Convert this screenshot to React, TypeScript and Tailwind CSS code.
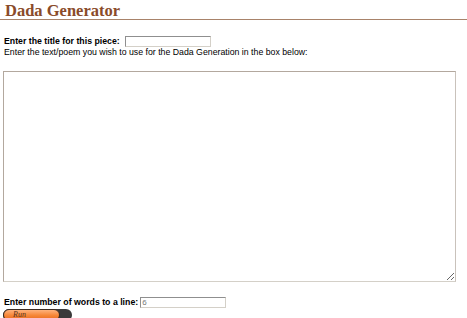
export default function App() {
  return (
    <div className="w-[467px] h-[318px] overflow-hidden bg-white text-black font-['Liberation_Sans',Arial,sans-serif]">
      <h1 className="pl-[5px] pt-[2px] h-[18px] text-[16.5px] leading-[17px] font-bold font-['Liberation_Serif','Times_New_Roman',serif] text-[#8a4b2a]">
        Dada Generator
      </h1>
      <div className="mt-[1px] h-px bg-[#a8836a]" />

      <form className="pl-[4px] pt-[16px]" onSubmit={(e) => e.preventDefault()}>
        <div className="flex items-center h-[11px] text-[8.75px] font-bold leading-[11px]">
          <span>Enter the title for this piece:</span>
          <input
            type="text"
            className="ml-[5px] w-[86px] h-[11px] border border-t-[#8f8f8f] border-l-[#8f8f8f] border-b-[#d4d0c8] border-r-[#d4d0c8] bg-white outline-none"
          />
        </div>
        <p className="text-[8.75px] leading-[11px]">
          Enter the text/poem you wish to use for the Dada Generation in the box below:
        </p>

        <textarea className="block -ml-[1px] mt-[13px] w-[453px] h-[211px] resize border border-t-[#b3a89e] border-l-[#b3a89e] border-b-[#d4d0c8] border-r-[#c9c2bb] bg-white outline-none" />

        <div className="mt-[15px] flex items-center h-[11px] text-[8.75px] font-bold leading-[11px]">
          <span>Enter number of words to a line:</span>
          <input
            type="text"
            defaultValue="6"
            className="ml-[2px] w-[86px] h-[11px] px-[1px] text-[8px] font-normal text-[#777] border border-t-[#8f8f8f] border-l-[#8f8f8f] border-b-[#d4d0c8] border-r-[#d4d0c8] bg-white outline-none"
          />
        </div>

        <button
          type="submit"
          className="mt-[1px] -ml-[1px] flex w-[69px] h-[12px] rounded-full bg-[#3a3a3a] p-0"
        >
          <span className="flex items-center w-[57px] h-[12px] rounded-full border border-[#3a2a20] bg-gradient-to-b from-[#fdb27c] via-[#f7893a] to-[#e86a1c] pl-[9px] text-[8px] italic font-['Liberation_Serif',serif] text-[#5a3420] leading-none">
            Run
          </span>
        </button>
      </form>
    </div>
  );
}
